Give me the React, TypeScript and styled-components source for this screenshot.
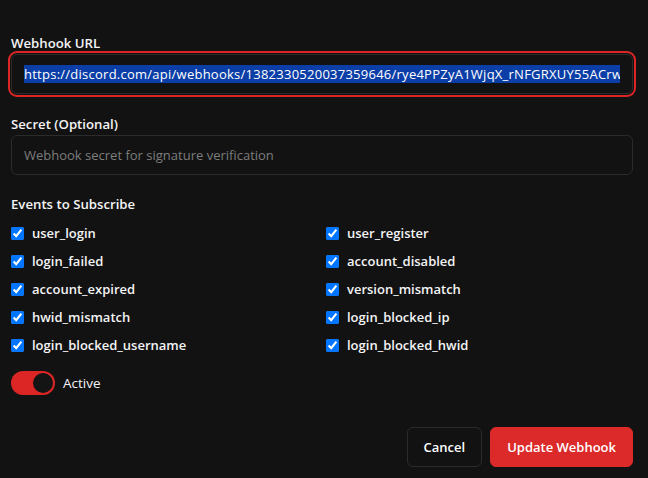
import React from "react";
import styled, { createGlobalStyle } from "styled-components";

const Global = createGlobalStyle`
  html, body { margin: 0; padding: 0; background: #121212; }
  body { font-family: "Open Sans", "Noto Sans", "Liberation Sans", sans-serif; color: #f4f4f5; }
  * { box-sizing: border-box; }
`;

const Page = styled.div`
  width: 648px;
  height: 478px;
  padding: 33px 15px 0 11px;
  display: flex;
  flex-direction: column;
  background: #121212;
`;

const Field = styled.div<{ $mb: number }>`
  display: flex;
  flex-direction: column;
  gap: 1px;
  margin-bottom: ${(p) => p.$mb}px;
`;

const Label = styled.div`
  font-size: 13.2px;
  line-height: 20px;
  font-weight: 600;
  color: #f4f4f5;
`;

const InputBox = styled.div<{ $focused?: boolean }>`
  height: 40px;
  border: 1px solid #2b2b2b;
  border-radius: 6px;
  background: #121212;
  padding: 0 12px;
  display: flex;
  align-items: center;
  font-size: 13px;
  box-shadow: ${(p) => (p.$focused ? "0 0 0 1px #121212, 0 0 0 3px #dc2626" : "none")};
`;

const InputText = styled.div`
  flex: 1;
  min-width: 0;
  overflow: hidden;
  white-space: nowrap;
  line-height: 18px;
`;

const Selected = styled.span`
  background: #0b3ea6;
  color: #ffffff;
  letter-spacing: 0.25px;
`;

const Placeholder = styled.span`
  color: #7d7d7d;
`;

const Events = styled.div`
  display: flex;
  flex-direction: column;
  gap: 9px;
`;

const Grid = styled.div`
  display: grid;
  grid-template-columns: 1fr 1fr;
  column-gap: 8px;
  row-gap: 8px;
`;

const CheckRow = styled.label`
  display: flex;
  align-items: center;
  gap: 8px;
  height: 20px;
  font-size: 13px;
  font-weight: 600;
  color: #f4f4f5;
`;

const Check = styled.input`
  margin: 0;
  width: 13px;
  height: 13px;
  accent-color: #0075ff;
`;

const ToggleRow = styled.div`
  display: flex;
  align-items: center;
  gap: 8px;
  margin-top: 16px;
  font-size: 13.5px;
  font-weight: 500;
`;

const Track = styled.div`
  width: 44px;
  height: 24px;
  border-radius: 12px;
  background: #dc2626;
  display: flex;
  align-items: center;
  justify-content: flex-end;
  padding: 2px;
`;

const Knob = styled.div`
  width: 20px;
  height: 20px;
  border-radius: 50%;
  background: #141414;
`;

const Actions = styled.div`
  display: flex;
  justify-content: flex-end;
  gap: 8px;
  margin-top: 32px;
`;

const Button = styled.button<{ $primary?: boolean }>`
  height: 40px;
  padding: 0 16px;
  border-radius: 6px;
  font-family: inherit;
  font-size: 13px;
  font-weight: 600;
  color: #ffffff;
  background: ${(p) => (p.$primary ? "#dc2a2a" : "#121212")};
  border: 1px solid ${(p) => (p.$primary ? "#dc2a2a" : "#2b2b2b")};
`;

const events: [string, string][] = [
  ["user_login", "user_register"],
  ["login_failed", "account_disabled"],
  ["account_expired", "version_mismatch"],
  ["hwid_mismatch", "login_blocked_ip"],
  ["login_blocked_username", "login_blocked_hwid"],
];

export default function App() {
  return (
    <>
      <Global />
      <Page>
        <Field $mb={20}>
          <Label>Webhook URL</Label>
          <InputBox $focused>
            <InputText>
              <Selected>https://discord.com/api/webhooks/1382330520037359646/rye4PPZyA1WjqX_rNFGRXUY55ACrwb</Selected>
            </InputText>
          </InputBox>
        </Field>
        <Field $mb={19}>
          <Label>Secret (Optional)</Label>
          <InputBox>
            <InputText>
              <Placeholder>Webhook secret for signature verification</Placeholder>
            </InputText>
          </InputBox>
        </Field>
        <Events>
          <Label>Events to Subscribe</Label>
          <Grid>
            {events.flat().map((e) => (
              <CheckRow key={e}>
                <Check type="checkbox" defaultChecked />
                {e}
              </CheckRow>
            ))}
          </Grid>
        </Events>
        <ToggleRow>
          <Track>
            <Knob />
          </Track>
          Active
        </ToggleRow>
        <Actions>
          <Button>Cancel</Button>
          <Button $primary>Update Webhook</Button>
        </Actions>
      </Page>
    </>
  );
}
